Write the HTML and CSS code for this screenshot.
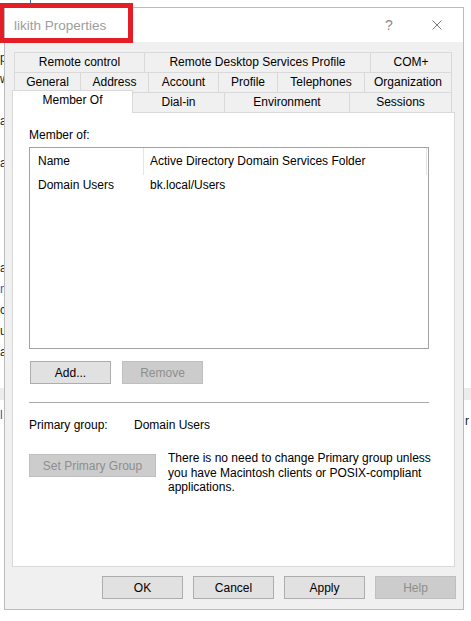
FILE: index.html
```html
<!DOCTYPE html>
<html lang="en">
<head>
  <meta charset="UTF-8" />
  <title>likith Properties</title>
  <link rel="stylesheet" href="styles.css">
</head>
<body>
  <div class="desk">
    <!-- bits of the console window peeking out behind the dialog -->
    <div class="behind-left">
      <div>p</div>
      <div>w</div>
      <div>&nbsp;</div>
      <div>a</div>
      <div>&nbsp;</div>
      <div>a</div>
      <div>&nbsp;</div>
      <div>&nbsp;</div>
      <div>&nbsp;</div>
      <div>&nbsp;</div>
      <div>a</div>
      <div class="link">n</div>
      <div>c</div>
      <div>u</div>
      <div>a</div>
      <div>&nbsp;</div>
      <div>&nbsp;</div>
      <div class="link">l</div>
    </div>
    <div class="behind-band"></div>
    <div class="behind-right">r</div>
    <div class="behind-tick"></div>

    <div class="dialog">
      <div class="titlebar">
        <span class="title">likith Properties</span>
        <span class="tb-help">?</span>
        <span class="tb-close">
          <svg width="10" height="10" viewBox="0 0 10 10">
            <path d="M0.5 0.5 L9.5 9.5 M9.5 0.5 L0.5 9.5" stroke="#7a7a7a" stroke-width="1" fill="none"/>
          </svg>
        </span>
      </div>

      <div class="content">
        <div class="tabs">
          <div class="tab-row row-1">
            <div class="tab">Remote control</div>
            <div class="tab">Remote Desktop Services Profile</div>
            <div class="tab">COM+</div>
          </div>
          <div class="tab-row row-2">
            <div class="tab">General</div>
            <div class="tab">Address</div>
            <div class="tab">Account</div>
            <div class="tab">Profile</div>
            <div class="tab">Telephones</div>
            <div class="tab">Organization</div>
          </div>
          <div class="tab-row row-3">
            <div class="tab active">Member Of</div>
            <div class="tab">Dial-in</div>
            <div class="tab">Environment</div>
            <div class="tab">Sessions</div>
          </div>
        </div>

        <div class="panel">
          <div class="label">Member of:</div>
          <div class="list">
            <div class="list-head">
              <div class="col-name">Name</div>
              <div class="col-folder">Active Directory Domain Services Folder</div>
            </div>
            <div class="list-row">
              <div class="col-name">Domain Users</div>
              <div class="col-folder">bk.local/Users</div>
            </div>
          </div>

          <div class="btn-row">
            <button class="btn">Add...</button>
            <button class="btn" disabled>Remove</button>
          </div>

          <div class="sep"></div>

          <div class="primary">
            <span class="primary-label">Primary group:</span>
            <span>Domain Users</span>
          </div>

          <div class="set-row">
            <button class="btn btn-wide" disabled>Set Primary Group</button>
            <p class="hint">There is no need to change Primary group unless you have Macintosh clients or POSIX-compliant applications.</p>
          </div>
        </div>

        <div class="actions">
          <button class="btn">OK</button>
          <button class="btn">Cancel</button>
          <button class="btn">Apply</button>
          <button class="btn" disabled>Help</button>
        </div>
      </div>
    </div>

    <div class="callout"></div>
  </div>
</body>
</html>
```

FILE: styles.css
```css
:root {
  --face: #f0f0f0;
  --tab-border: #d9d9d9;
  --btn: #e1e1e1;
  --btn-border: #adadad;
  --off: #cccccc;
  --off-border: #bfbfbf;
  --off-text: #8e8e8e;
  --red: #e41e26;
}

* {
  box-sizing: border-box;
}

body {
  margin: 0;
  background: #fff;
  font-family: "Liberation Sans", Arial, sans-serif;
  font-size: 12px;
  color: #000;
}

.desk {
  position: relative;
  width: 471px;
  height: 621px;
  overflow: hidden;
}

/* background window scraps */
.behind-left {
  position: absolute;
  left: 0;
  top: 48px;
  width: 8px;
  line-height: 21px;
  color: #222;
}

.behind-left .link {
  color: #1c5cb8;
}

.behind-band {
  position: absolute;
  left: 0;
  top: 388px;
  width: 471px;
  height: 12px;
  background: #ececec;
}

.behind-right {
  position: absolute;
  left: 465px;
  top: 413px;
  line-height: 16px;
  color: #222;
}

.behind-tick {
  position: absolute;
  left: 30px;
  top: 0;
  width: 1px;
  height: 3px;
  background: #3a6ab0;
}

/* dialog window */
.dialog {
  position: absolute;
  left: 4px;
  top: 7px;
  width: 460px;
  height: 603px;
  border: 1px solid #bcbcbc;
  background: var(--face);
  display: flex;
  flex-direction: column;
}

.titlebar {
  height: 34px;
  background: #fff;
  display: flex;
  align-items: center;
  padding: 0 21px 0 9px;
}

.title {
  font-size: 13.5px;
  color: #9d9d9d;
}

.tb-help {
  margin-left: auto;
  width: 8px;
  margin-right: 39px;
  font-size: 14px;
  color: #8a8a8a;
}

.tb-close {
  display: flex;
  width: 10px;
  height: 10px;
}

.content {
  flex: 1;
  padding: 10px 8px 10px 7px;
  display: flex;
  flex-direction: column;
}

/* tabs */
.tab-row {
  display: grid;
  height: 20px;
}

.row-1 {
  grid-template-columns: 130px 226px 82px;
  margin-left: 2px;
}

.row-2 {
  grid-template-columns: 66px 68px 70px 59px 87px 88px;
  margin-left: 2px;
}

.row-3 {
  grid-template-columns: 121px 91px 125px 103px;
}

.tab {
  border-top: 1px solid var(--tab-border);
  border-left: 1px solid var(--tab-border);
  background: var(--face);
  text-align: center;
  line-height: 19px;
  white-space: nowrap;
}

.tab:last-child {
  border-right: 1px solid var(--tab-border);
}

.tab.active {
  position: relative;
  z-index: 1;
  align-self: start;
  height: 23px;
  margin-top: -2px;
  margin-bottom: -1px;
  border-right: 1px solid var(--tab-border);
  background: #fff;
  line-height: 18px;
}

.tab.active + .tab {
  border-left: none;
}

/* page */
.panel {
  height: 455px;
  background: #fff;
  border: 1px solid var(--tab-border);
  padding: 15px 25px 0 16px;
}

.label {
  line-height: 15px;
  margin-bottom: 4px;
}

.list {
  height: 202px;
  border: 1px solid #a2a2a2;
}

.list-head,
.list-row {
  display: grid;
  grid-template-columns: 113px 284px;
  white-space: nowrap;
}

.list-head {
  height: 27px;
  line-height: 27px;
}

.list-row {
  line-height: 20px;
}

.col-name {
  padding-left: 8px;
}

.col-folder {
  padding-left: 7px;
}

.list-head .col-folder {
  padding-left: 6px;
  border-left: 1px solid #e5e5e5;
  border-right: 1px solid #e5e5e5;
}

.btn-row {
  display: flex;
  gap: 11px;
  margin-top: 12px;
  margin-left: 1px;
}

.btn {
  width: 81px;
  height: 23px;
  padding: 0;
  border: 1px solid var(--btn-border);
  background: var(--btn);
  font-family: inherit;
  font-size: 12px;
  color: #000;
}

.btn:disabled {
  background: var(--off);
  border-color: var(--off-border);
  color: var(--off-text);
}

.sep {
  height: 1px;
  margin-top: 18px;
  background: #a9a9a9;
}

.primary {
  display: flex;
  margin-top: 15px;
  line-height: 15px;
}

.primary-label {
  width: 105px;
}

.set-row {
  display: flex;
  align-items: flex-start;
  margin-top: 21px;
}

.btn-wide {
  width: 127px;
  flex-shrink: 0;
}

.hint {
  width: 276px;
  margin: -3px -16px 0 12px;
  line-height: 14.5px;
}

.actions {
  display: flex;
  justify-content: flex-end;
  gap: 10px;
  margin-top: 9px;
  margin-right: -1px;
}

/* red annotation box round the title */
.callout {
  position: absolute;
  left: -1px;
  top: 3px;
  width: 134px;
  height: 40px;
  border: 5px solid var(--red);
}
```
